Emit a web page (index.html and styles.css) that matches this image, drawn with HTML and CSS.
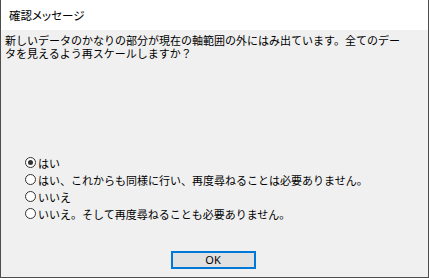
FILE: index.html
```html
<!DOCTYPE html>
<html lang="ja">
<head>
<meta charset="utf-8">
<link rel="stylesheet" href="styles.css">
</head>
<body>
<div class="window">
  <div class="titlebar">確認メッセージ</div>
  <div class="content">
    <p class="message"><span class="line">新しいデータのかなりの部分が現在の軸範囲の外にはみ出ています。全てのデー</span><span class="line">タを見えるよう再スケールしますか？</span></p>
    <ul class="options">
      <li class="option"><span class="radio checked"></span><span class="label">はい</span></li>
      <li class="option"><span class="radio"></span><span class="label">はい、これからも同様に行い、再度尋ねることは必要ありません。</span></li>
      <li class="option"><span class="radio"></span><span class="label">いいえ</span></li>
      <li class="option"><span class="radio"></span><span class="label">いいえ。そして再度尋ねることも必要ありません。</span></li>
    </ul>
    <div class="footer"><button class="ok">OK</button></div>
  </div>
</div>
</body>
</html>
```
FILE: styles.css
```css
html, body {
  margin: 0;
  padding: 0;
}
body {
  font-family: "Noto Sans CJK JP", "Noto Sans", sans-serif;
  color: #000;
}
.window {
  width: 429px;
  height: 278px;
  box-sizing: border-box;
  border: 1px solid #4d4d4d;
  border-top: none;
  display: flex;
  flex-direction: column;
}
.titlebar {
  height: 30px;
  background: #fff;
  font-size: 11.5px;
  font-feature-settings: "palt";
  line-height: 30px;
  padding-left: 8px;
  flex-shrink: 0;
}
.content {
  flex: 1;
  background: #f0f0f0;
  display: flex;
  flex-direction: column;
  padding-top: 4px;
}
.message {
  margin: 0 0 0 4px;
  font-size: 11px;
  white-space: nowrap;
}
.line {
  display: block;
  height: 13px;
  line-height: 13px;
}
.options {
  list-style: none;
  margin: 94px 0 0 24px;
  padding: 0;
}
.option {
  display: flex;
  align-items: center;
  height: 17px;
  font-size: 11px;
}
.radio {
  width: 11px;
  height: 11px;
  box-sizing: border-box;
  border: 1px solid #333;
  border-radius: 50%;
  background: #fff;
  margin-right: 2px;
  display: flex;
  align-items: center;
  justify-content: center;
}
.radio.checked::after {
  content: "";
  width: 5px;
  height: 5px;
  border-radius: 50%;
  background: #333;
}
.footer {
  margin-top: auto;
  display: flex;
  justify-content: center;
  padding: 0 3px 8px 0;
}
.ok {
  width: 85px;
  height: 18px;
  box-sizing: border-box;
  border: 2px solid #0078d7;
  background: #e1e1e1;
  font-family: "Noto Sans", sans-serif;
  font-size: 11px;
  line-height: 14px;
  padding: 0;
  color: #000;
}
```
